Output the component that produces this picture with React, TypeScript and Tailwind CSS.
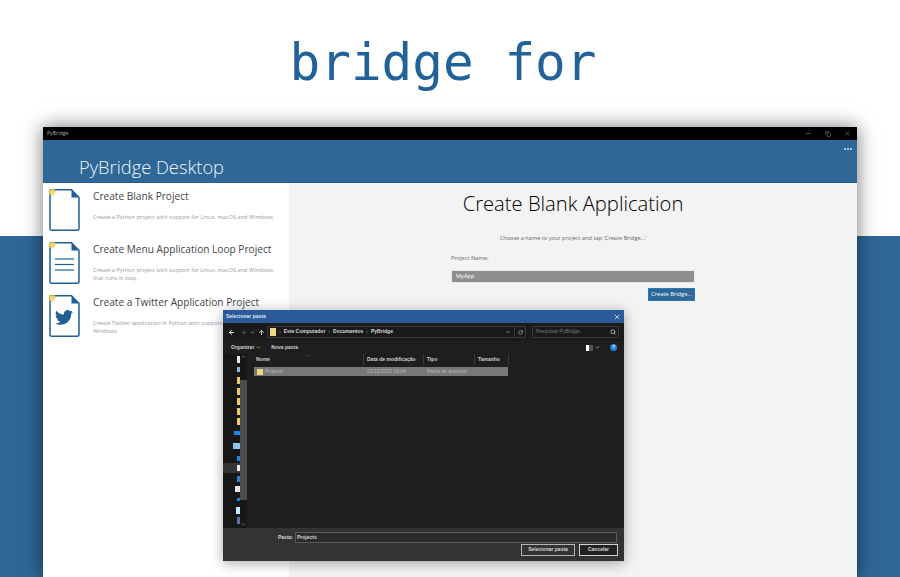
import { ChevronDown, ChevronUp, ArrowLeft, ArrowRight, ArrowUp, RotateCw, Search, X, Minus, Copy } from "lucide-react";

const UI = "font-['Open_Sans',sans-serif]";
const BLUE = "#1f5f96";

const DocIcon = ({ kind }: { kind: "blank" | "menu" | "twitter" }) => (
  <svg width="31" height="42" viewBox="0 0 31 42" className="shrink-0 overflow-visible">
    <path d="M1.8 .8 H22.5 L30 8.5 V39.8 a1.4 1.4 0 0 1 -1.4 1.4 H2.4 a1.4 1.4 0 0 1 -1.4 -1.4 V1.6 a.8 .8 0 0 1 .8 -.8z" fill="#fff" stroke={BLUE} strokeWidth="1.5" />
    <path d="M22.5 .8 L30 8.5 H22.5z" fill={BLUE} />
    {kind === "menu" && (
      <g stroke={BLUE} strokeWidth="1.2">
        <line x1="6" y1="17" x2="25" y2="17" />
        <line x1="6" y1="22.5" x2="25" y2="22.5" />
        <line x1="6" y1="28" x2="25" y2="28" />
      </g>
    )}
    {kind === "twitter" && (
      <path
        transform="translate(6 13.5) scale(0.75)"
        fill={BLUE}
        d="M23.95 4.57a10 10 0 0 1-2.82.77 4.96 4.96 0 0 0 2.16-2.72c-.95.55-2 .96-3.13 1.19a4.92 4.92 0 0 0-8.38 4.48C7.69 8.1 4.07 6.13 1.64 3.16a4.82 4.82 0 0 0-.67 2.48c0 1.71.87 3.21 2.19 4.1a4.9 4.9 0 0 1-2.23-.62v.06a4.92 4.92 0 0 0 3.95 4.83 5 5 0 0 1-2.21.08 4.94 4.94 0 0 0 4.6 3.42A9.87 9.87 0 0 1 0 19.54a14 14 0 0 0 7.56 2.21c9.05 0 14-7.5 14-13.98 0-.21 0-.42-.02-.63a9.94 9.94 0 0 0 2.46-2.55z"
      />
    )}
    <g fill="#f4d75e">
      <path d="M3 -2 L4.2 1.8 L8 3 L4.2 4.2 L3 8 L1.8 4.2 L-2 3 L1.8 1.8z" />
      <path d="M-.4 -.4 L3 1.6 L6.4 -.4 L4.4 3 L6.4 6.4 L3 4.4 L-.4 6.4 L1.6 3z" />
    </g>
  </svg>
);

const projects = [
  { kind: "blank" as const, title: "Create Blank Project", desc: ["Create a Python project with support for Linux, macOS and Windows"] },
  { kind: "menu" as const, title: "Create Menu Application Loop Project", desc: ["Create a Python project with support for Linux, macOS and Windows", "that runs in loop"] },
  { kind: "twitter" as const, title: "Create a Twitter Application Project", desc: ["Create Twitter application in Python with support for Linux, macOS and", "Windows"] },
];

// left pane of the folder dialog: row height, icon size, icon colour
const navItems = [
  { rh: 10, w: 3, h: 7, c: "#e8e8e8" },
  { rh: 11, w: 3, h: 5, c: "#8fb8d8" },
  { rh: 11, w: 3, h: 7, c: "#eccb6a" },
  { rh: 10, w: 3, h: 7, c: "#eccb6a" },
  { rh: 10, w: 3, h: 7, c: "#eccb6a" },
  { rh: 10, w: 3, h: 7, c: "#eccb6a" },
  { rh: 10, w: 3, h: 7, c: "#eccb6a" },
  { rh: 13, w: 6, h: 4, c: "#1e88e5" },
  { rh: 14, w: 7, h: 6, c: "#8fc4e8" },
  { rh: 10, w: 3, h: 5, c: "#1e88e5" },
  { rh: 10, w: 3, h: 6, c: "#e8e8e8", active: true },
  { rh: 11, w: 3, h: 6, c: "#2f7fd0" },
  { rh: 10, w: 5, h: 6, c: "#dfe6ec" },
  { rh: 11, w: 3, h: 3, c: "#1e88e5" },
  { rh: 10, w: 4, h: 7, c: "#bfe9f8" },
  { rh: 10, w: 3, h: 7, c: "#5f6fa8" },
  { rh: 9, w: 4, h: 3, c: "#1e88e5" },
];

const Dialog = () => (
  <div className="absolute left-[223px] top-[310px] z-10 flex h-[251px] w-[401px] flex-col bg-[#1e1e1e] font-['Liberation_Sans',sans-serif] shadow-[0_2px_12px_rgba(0,0,0,0.35)]">
    <div className="flex h-[13px] shrink-0 items-center justify-between bg-[#2a5a9a] px-[3px] text-[5px] font-bold text-[#dfe8f2]">
      <span>Selecionar pasta</span>
      <X size={8} strokeWidth={2} className="text-white" />
    </div>
    <div className="flex h-[18px] shrink-0 items-center bg-[#1a1a1a] pl-[5px] pr-[5px] text-[5px] font-bold text-[#d8d8d8]">
      <ArrowLeft size={7} strokeWidth={3} className="text-white" />
      <ArrowRight size={7} strokeWidth={2} className="ml-[5px] text-[#777]" />
      <ChevronDown size={5} strokeWidth={3} className="ml-[3px] text-[#bbb]" />
      <ArrowUp size={7} strokeWidth={3} className="ml-[3px] text-[#ddd]" />
      <div className="ml-[2px] flex h-[12px] w-[259px] items-center gap-[3px] border border-[#3a3a3a] pl-[2px] pr-[2px]">
        <span className="h-[8px] w-[6px] bg-[#efd77d]" />
        <span className="text-[#777]">›</span>
        <span>Este Computador</span>
        <span className="text-[#777]">›</span>
        <span>Documentos</span>
        <span className="text-[#777]">›</span>
        <span>PyBridge</span>
        <ChevronDown size={6} strokeWidth={3} className="ml-auto text-[#aaa]" />
        <span className="h-full w-px bg-[#3a3a3a]" />
        <RotateCw size={5} strokeWidth={3} className="text-[#aaa]" />
      </div>
      <div className="ml-[6px] flex h-[12px] flex-1 items-center justify-between border border-[#3a3a3a] pl-[3px] pr-[2px] font-normal text-[#777]">
        <span>Pesquisar PyBridge</span>
        <Search size={6} strokeWidth={3} className="text-[#ccc]" />
      </div>
    </div>
    <div className="flex h-[13px] shrink-0 items-center gap-[10px] pl-[8px] pr-[7px] text-[5px] font-bold text-[#cfcfcf]">
      <span className="flex items-center gap-[2px]">Organizar <ChevronDown size={5} strokeWidth={3} /></span>
      <span>Nova pasta</span>
      <span className="ml-auto flex items-center gap-[2px]">
        <span className="h-[6px] w-[3px] bg-white" />
        <span className="-ml-[2px] h-[6px] w-[4px] bg-[#555]" />
        <ChevronDown size={5} strokeWidth={3} />
      </span>
      <span className="flex h-[7px] w-[7px] items-center justify-center rounded-full bg-[#1e7fd8] text-[5px] font-bold text-white">?</span>
    </div>
    <div className="flex min-h-0 flex-1">
      <div className="flex w-[17px] shrink-0 flex-col overflow-hidden bg-[#171717]">
        {navItems.map((n, i) => (
          <div key={i} className={`flex shrink-0 items-center justify-end ${n.active ? "bg-[#353535]" : ""}`} style={{ height: n.rh }}>
            <span style={{ width: n.w, height: n.h, backgroundColor: n.c }} />
          </div>
        ))}
      </div>
      <div className="flex w-[7px] shrink-0 flex-col items-center bg-[#171717] text-[#999]">
        <ChevronUp size={5} strokeWidth={3} className="shrink-0" />
        <div className="mt-[21px] h-[120px] w-full shrink-0 bg-[#4d4d4d]" />
        <ChevronDown size={5} strokeWidth={3} className="mt-auto mb-[1px] shrink-0" />
      </div>
      <div className="relative flex-1 pl-[7px] text-[5px]">
        <ChevronUp size={5} strokeWidth={2} className="absolute left-[58px] top-[-1px] text-[#999]" />
        <div className="flex h-[11px] items-center font-bold text-[#cfcfcf]">
          <span className="w-[110px] border-r border-[#3c3c3c] pl-[2px] leading-[11px]">Nome</span>
          <span className="w-[60px] border-r border-[#3c3c3c] pl-[3px] leading-[11px]">Data de modificação</span>
          <span className="w-[51px] border-r border-[#3c3c3c] pl-[3px] leading-[11px]">Tipo</span>
          <span className="w-[34px] border-r border-[#3c3c3c] pl-[3px] leading-[11px]">Tamanho</span>
        </div>
        <div className="mt-[2px] flex h-[9px] w-[254px] items-center bg-[#787878] text-[#b8b8b8]">
          <span className="flex w-[110px] items-center gap-[2px] pl-[3px]">
            <span className="h-[6px] w-[6px] bg-[#efd77d]" />Projects
          </span>
          <span className="w-[60px] pl-[3px]">01/12/2021 09:04</span>
          <span className="pl-[3px]">Pasta de arquivos</span>
        </div>
      </div>
    </div>
    <div className="h-[33px] shrink-0 bg-[#333333] pt-[4px] text-[5px] font-bold text-[#d8d8d8]">
      <div className="flex h-[11px] items-center pr-[7px]">
        <span className="ml-[55px] mr-[2px]">Pasta:</span>
        <div className="flex h-[11px] flex-1 items-center border border-[#5a5a5a] bg-[#2b2b2b] pl-[1px]">Projects</div>
      </div>
      <div className="mt-px flex justify-end gap-[4px] pr-[6px]">
        <span className="flex h-[12px] w-[54px] items-center justify-center border border-[#b5b5b5] bg-[#333]">Selecionar pasta</span>
        <span className="flex h-[12px] w-[39px] items-center justify-center border border-[#d0d0d0] bg-[#222]">Cancelar</span>
      </div>
    </div>
  </div>
);

export default function App() {
  return (
    <div className="relative h-[577px] w-[900px] overflow-hidden bg-white">
      <h1 className="flex h-[236px] justify-center pt-[28px] pr-[14px] font-['DejaVu_Sans_Mono',monospace] text-[51px] leading-[70px] text-[#22629a]">
        bridge for
      </h1>
      <div className="h-[341px] bg-[#2f6797]" />

      <div className={`absolute left-[43px] top-[127px] flex h-[450px] w-[814px] flex-col bg-[#f3f3f3] shadow-[0_0_18px_rgba(0,0,0,0.55)] ${UI}`}>
        <div className="flex h-[13px] shrink-0 items-center justify-between bg-black pl-[4px] pr-[6px] text-[5.2px] text-[#aaa]">
          <span>PyBridge</span>
          <span className="flex items-center gap-[13px] text-[#888]">
            <Minus size={7} />
            <Copy size={6} />
            <X size={7} />
          </span>
        </div>
        <div className="relative flex h-[43px] shrink-0 items-center border-b border-[#1d5f96] bg-[#2f6797] pl-[36px] pt-[11px] text-[18.3px] font-light text-[#eef4f9]">
          PyBridge Desktop
          <span className="absolute right-[5px] top-[8px] flex gap-px">
            <span className="h-[2px] w-[2px] bg-[#a9c6dc]" />
            <span className="h-[2px] w-[2px] bg-[#a9c6dc]" />
            <span className="h-[2px] w-[2px] bg-[#a9c6dc]" />
          </span>
        </div>
        <div className="flex min-h-0 flex-1">
          <div className="flex w-[246px] shrink-0 flex-col gap-[11px] bg-white pl-[6px] pt-[6px]">
            {projects.map((p) => (
              <div key={p.title} className="flex h-[42px] gap-[13px]">
                <DocIcon kind={p.kind} />
                <div>
                  <div className="whitespace-nowrap text-[10.15px] leading-[14px] text-[#444]">{p.title}</div>
                  <div className="mt-[10px] text-[5.65px] leading-[8px] text-[#999]">
                    {p.desc.map((d) => (
                      <div key={d} className="whitespace-nowrap">{d}</div>
                    ))}
                  </div>
                </div>
              </div>
            ))}
          </div>
          <div className="flex flex-1 flex-col items-center pt-[5px]">
            <h2 className="text-[20.2px] font-light leading-[30px] text-black">Create Blank Application</h2>
            <p className="mt-[16px] text-[5.65px] leading-[9px] text-[#666]">Choose a name to your project and tap 'Create Bridge...'</p>
            <div className="mt-[11px] flex w-[244px] flex-col text-[5.7px] text-[#666]">
              <span className="leading-[9px]">Project Name:</span>
              <div className="mt-[7px] flex h-[13px] items-center border border-[#e8e8e8] bg-[#8f8f8f] pl-[4px] text-white">MyApp</div>
              <button className="mt-[5px] flex h-[13px] w-[47px] items-center justify-center self-end border border-[#2a7ab5] bg-[#2f6797] text-white">Create Bridge...</button>
            </div>
          </div>
        </div>
      </div>
      <Dialog />
    </div>
  );
}
